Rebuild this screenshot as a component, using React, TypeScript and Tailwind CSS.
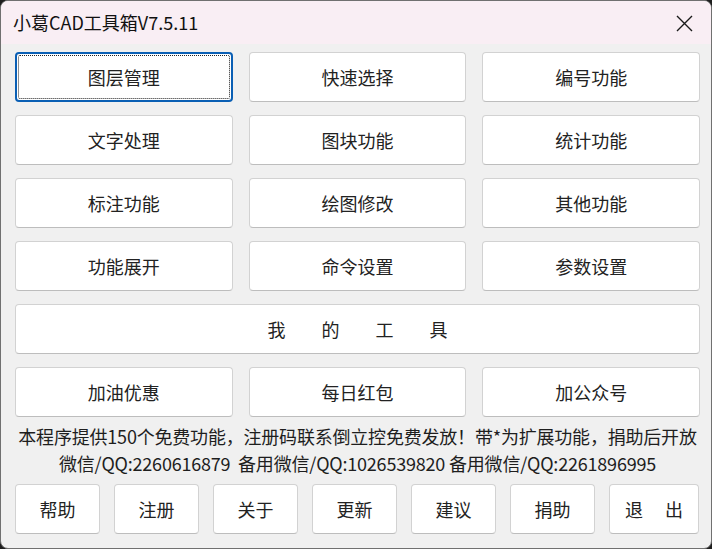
import { ReactNode } from "react";

const font = { fontFamily: '"Noto Sans CJK SC", "Noto Sans", sans-serif' };

function Btn({ children, focused, className }: { children: ReactNode; focused?: boolean; className?: string }) {
  return (
    <div
      className={`relative flex h-[50px] items-center justify-center rounded-[4px] bg-white text-[18px] text-[#222] select-none ${
        focused ? "border-2 border-[#0a5fb4]" : "border border-[#d2d2d2] border-b-[#bdbdbd]"
      } ${className ?? ""}`}
    >
      {focused && <div className="absolute inset-[1px] rounded-[2px] border border-dotted border-[#222]" />}
      {children}
    </div>
  );
}

const grid = [
  "图层管理", "快速选择", "编号功能",
  "文字处理", "图块功能", "统计功能",
  "标注功能", "绘图修改", "其他功能",
  "功能展开", "命令设置", "参数设置",
];

const bottom = ["帮助", "注册", "关于", "更新", "建议", "捐助"];

export default function App() {
  return (
    <div className="h-[549px] w-[712px] bg-[#1e1e1e]" style={font}>
      <div className="flex h-full w-full flex-col overflow-hidden rounded-[8px] border border-[#707070] bg-[#f0f0f0]">
        <div className="flex h-[43px] shrink-0 items-center justify-between bg-[#f9eef4] pl-[12px] pr-[18px]">
          <span className="text-[18px] text-[#111]">小葛CAD工具箱V7.5.11</span>
          <svg width="17" height="17" viewBox="0 0 17 17" className="mt-[1px]">
            <path d="M1 1 L16 16 M16 1 L1 16" stroke="#1a1a1a" strokeWidth="1.4" />
          </svg>
        </div>
        <div className="flex flex-col pl-[14px] pr-[11px] pt-[8px]">
          <div className="grid grid-cols-3 gap-x-[16px] gap-y-[13px]">
            {grid.map((t, i) => (
              <Btn key={t} focused={i === 0}>
                {t}
              </Btn>
            ))}
            <Btn className="col-span-3 gap-[36px]">
              <span>我</span>
              <span>的</span>
              <span>工</span>
              <span>具</span>
            </Btn>
            <Btn>加油优惠</Btn>
            <Btn>每日红包</Btn>
            <Btn>加公众号</Btn>
          </div>
          <div className="mt-[6px] flex flex-col items-center text-[18px] leading-[27px] tracking-[-0.2px] text-[#1e1e1e] whitespace-pre">
            <div>本程序提供150个免费功能，注册码联系倒立控免费发放！带*为扩展功能，捐助后开放</div>
            <div>微信/QQ:2260616879  备用微信/QQ:1026539820 备用微信/QQ:2261896995</div>
          </div>
          <div className="mt-[7px] flex gap-[14px]">
            {bottom.map((t) => (
              <Btn key={t} className="w-[85px]">
                {t}
              </Btn>
            ))}
            <Btn className="w-[90px] gap-[22px]">
              <span>退</span>
              <span>出</span>
            </Btn>
          </div>
        </div>
      </div>
    </div>
  );
}
